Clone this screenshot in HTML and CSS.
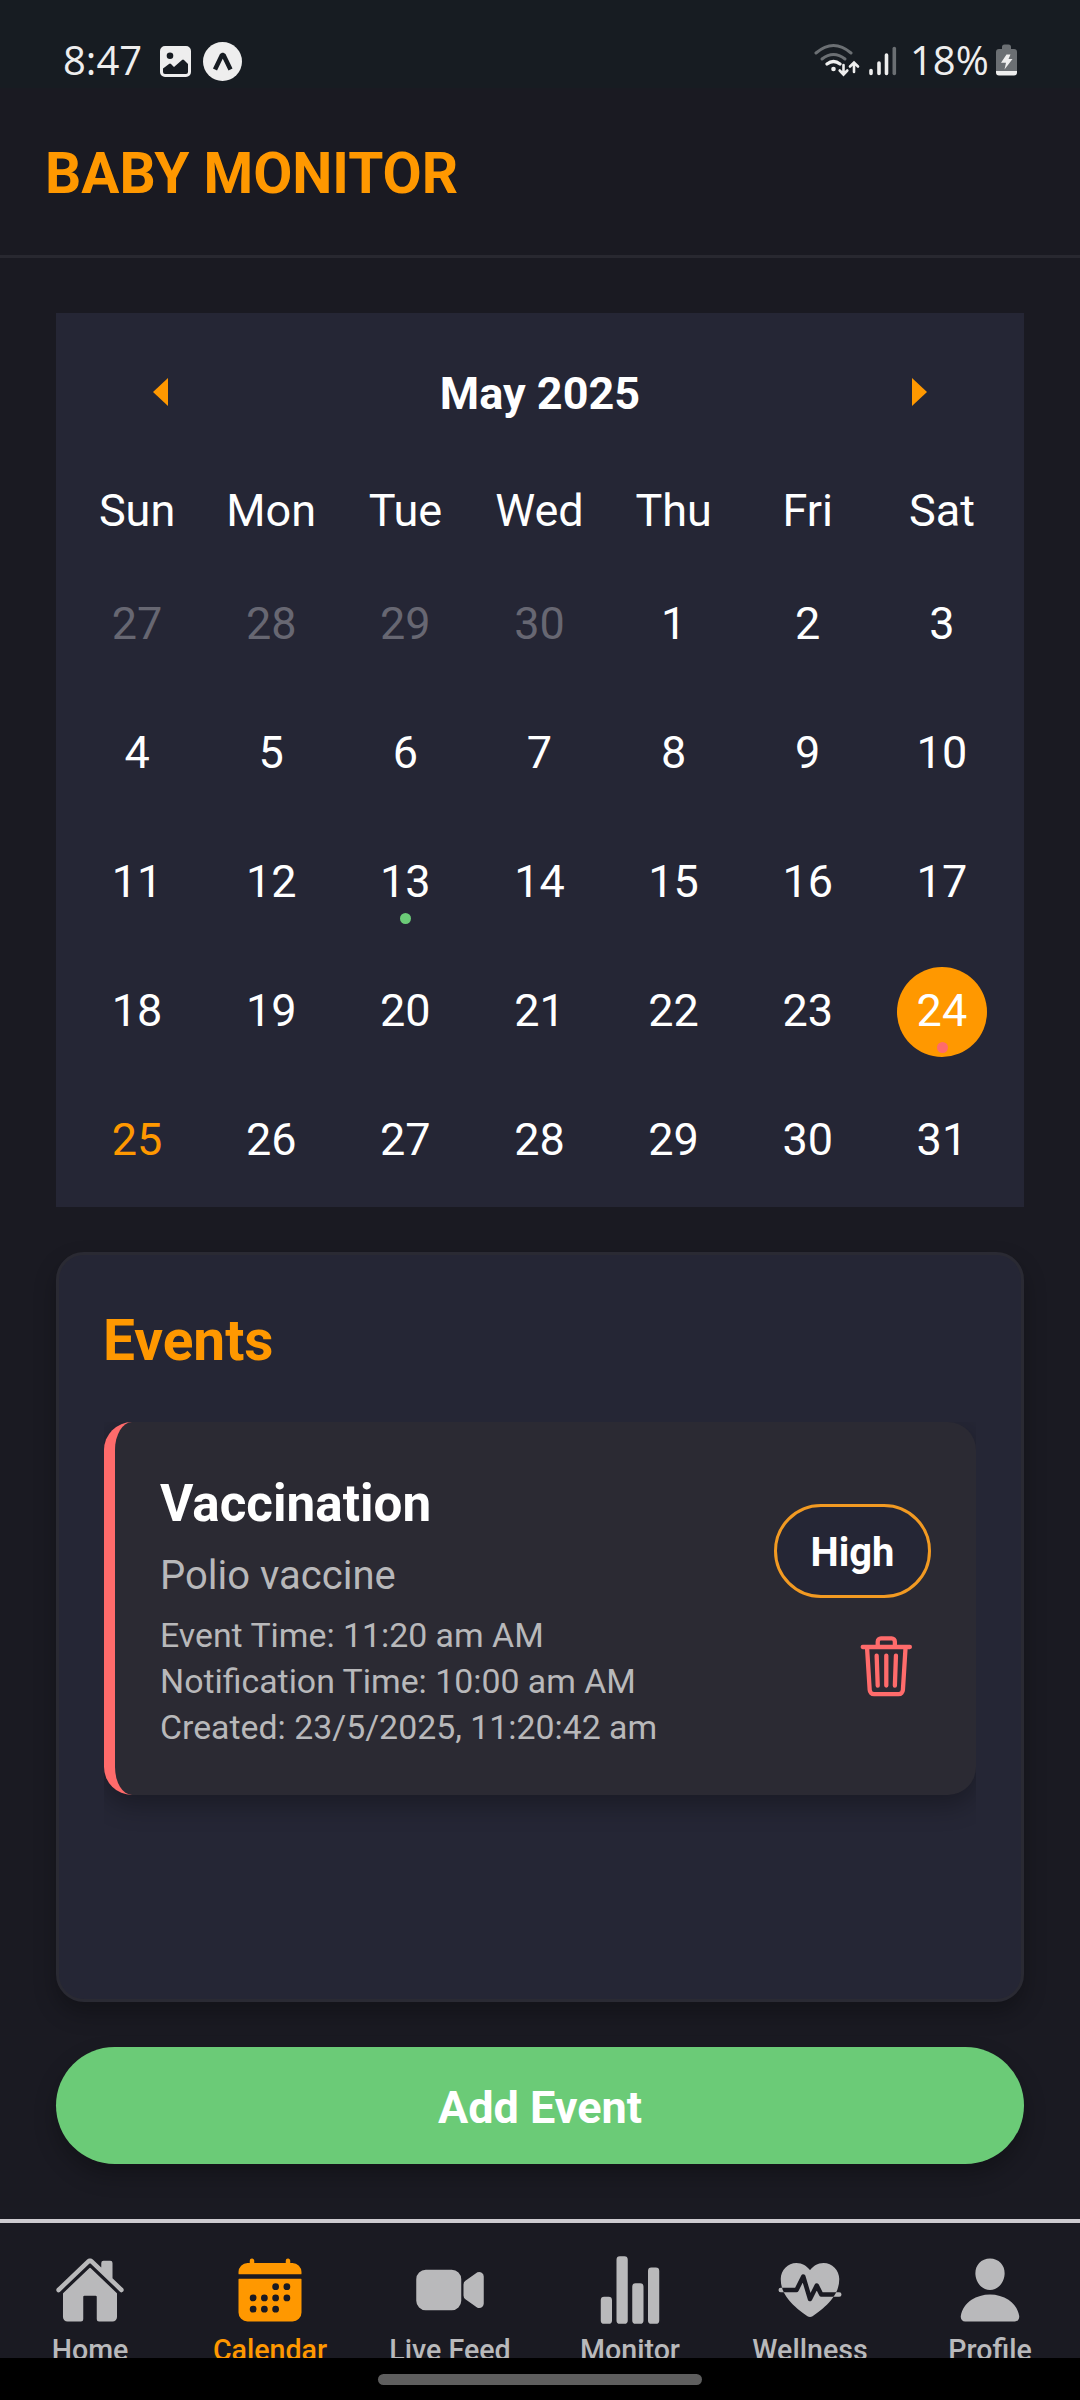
FILE: index.html
```html
<!DOCTYPE html>
<html lang="en">
<head>
<meta charset="utf-8">
<title>Baby Monitor</title>
<link rel="stylesheet" href="styles.css">
</head>
<body>
<div class="screen">
  <div class="status">
    <span class="status-text clock">8:47</span>
    <svg class="ic-photo" viewBox="0 0 31 31"><path fill="#eee" fill-rule="evenodd" d="M5 0h21a5 5 0 015 5v21a5 5 0 01-5 5H5a5 5 0 01-5-5V5a5 5 0 015-5zM10 6.500a3.300 3.300 0 100 6.600 3.300 3.300 0 000-6.600zM3 22.500V26a2 2 0 002 2h21a2 2 0 002-2v-8l-4-4a1.500 1.500 0 00-2 0l-8 7-3-3a1.500 1.500 0 00-2 0z"/></svg>
    <svg class="ic-expo" viewBox="0 0 39 39"><circle cx="19.500" cy="19.500" r="19.500" fill="#eee"/><path d="M12 27.500L19 13h1.500L27.500 27.500" fill="none" stroke="#171c22" stroke-width="4.500" stroke-linejoin="bevel"/></svg>
    <span class="spacer"></span>
    <svg class="ic-wifi" viewBox="0 0 46 34" fill="none" stroke-linecap="round"><g stroke="#6b6f73" stroke-width="3"><path d="M2 10q17.500-15 35 0"/><path d="M8 16q11.500-9 23 0"/></g><path d="M13 21q6.500-5 13 0" stroke="#eee" stroke-width="3.400"/><circle cx="19.500" cy="26" r="2.300" fill="#eee"/><path d="M29.500 22v9m-3.800-3.500l3.800 4 3.800-4M40 29v-9m-4 3.500l4-4 4 4" stroke="#eee" stroke-width="2.600"/></svg>
    <svg class="ic-signal" viewBox="0 0 28 30" stroke="#eee" stroke-width="3.600" stroke-linecap="round"><path d="M2 24.500v3M10 17v10.500M17.500 9v18.500"/><path d="M25.300 2.500v25" stroke="#6b6f73"/></svg>
    <span class="status-text battery-text">18%</span>
    <svg class="ic-battery" viewBox="0 0 21 32"><path fill="#6b6f73" d="M6 5V3a2.500 2.500 0 012.500-2.500h4A2.500 2.500 0 0115 3v2h3a3 3 0 013 3v19H0V8a3 3 0 013-3z"/><path fill="#eee" d="M0 27h21v1.500a3 3 0 01-3 3H3a3 3 0 01-3-3zM10.500 10.500h4L12.500 15h4L8.500 25.500l1.500-6.700H5z"/></svg>
  </div>
  <header class="header"><h1 class="title">BABY MONITOR</h1></header>
  <main class="main">
    <section class="calendar">
      <div class="cal-head">
        <svg class="arrow" viewBox="0 0 15 28"><path d="M15 0v28L0 14z"/></svg>
        <span class="month">May 2025</span>
        <svg class="arrow" viewBox="0 0 15 28"><path d="M0 0v28l15-14z"/></svg>
      </div>
      <div class="week names"><span>Sun</span><span>Mon</span><span>Tue</span><span>Wed</span><span>Thu</span><span>Fri</span><span>Sat</span></div>
      <div class="days">
        <span class="day out">27</span><span class="day out">28</span><span class="day out">29</span><span class="day out">30</span><span class="day">1</span><span class="day">2</span><span class="day">3</span>
        <span class="day">4</span><span class="day">5</span><span class="day">6</span><span class="day">7</span><span class="day">8</span><span class="day">9</span><span class="day">10</span>
        <span class="day">11</span><span class="day">12</span><span class="day">13<i class="dot green"></i></span><span class="day">14</span><span class="day">15</span><span class="day">16</span><span class="day">17</span>
        <span class="day">18</span><span class="day">19</span><span class="day">20</span><span class="day">21</span><span class="day">22</span><span class="day">23</span><span class="day selected">24<i class="dot red"></i></span>
        <span class="day today">25</span><span class="day">26</span><span class="day">27</span><span class="day">28</span><span class="day">29</span><span class="day">30</span><span class="day">31</span>
      </div>
    </section>
    <section class="events">
      <h2 class="events-title">Events</h2>
      <div class="event-list">
        <article class="event">
          <div class="event-info">
            <h3 class="event-name">Vaccination</h3>
            <p class="event-desc">Polio vaccine</p>
            <p class="event-meta">Event Time: 11:20 am AM</p>
            <p class="event-meta">Notification Time: 10:00 am AM</p>
            <p class="event-meta">Created: 23/5/2025, 11:20:42 am</p>
          </div>
          <div class="event-side">
            <span class="badge">High</span>
            <svg class="trash" viewBox="0 0 512 512"><path d="M112 112l20 320c.95 18.490 14.400 32 32 32h184c17.670 0 30.870-13.510 32-32l20-320M80 112h352M192 112V72a24 24 0 0124-24h80a24 24 0 0124 24v40M256 176v224M184 176l8 224M328 176l-8 224"/></svg>
          </div>
        </article>
      </div>
    </section>
    <button class="add">Add Event</button>
  </main>
  <nav class="tabs">
    <div class="tab"><svg class="tab-icon" viewBox="0 0 512 512"><path d="M261.560 101.280a8 8 0 00-11.060 0L66.400 277.150a8 8 0 00-2.470 5.790L63.900 448a32 32 0 0032 32H192a16 16 0 0016-16V304a8 8 0 018-8h80a8 8 0 018 8v160a16 16 0 0016 16h96.060a32 32 0 0032-32V282.940a8 8 0 00-2.470-5.790z"/><path d="M490.910 244.150l-74.800-71.560V64a16 16 0 00-16-16h-48a16 16 0 00-16 16v32l-57.920-55.380C272.770 35.140 264.710 32 256 32c-8.680 0-16.720 3.140-22.140 8.630l-212.700 203.500c-6.220 6-7 15.870-1.340 22.370A16 16 0 0043 267.560L250.500 69.280a8 8 0 0111.060 0l207.520 198.280a16 16 0 0022.590-.44c6.140-6.360 5.630-16.860-.76-22.970z"/></svg><span>Home</span></div>
    <div class="tab active"><svg class="tab-icon" viewBox="0 0 512 512"><path fill-rule="evenodd" d="M480 128a64 64 0 00-64-64h-16V48.450c0-8.610-6.620-16-15.230-16.430A16 16 0 00368 48v16H144V48.450c0-8.610-6.620-16-15.230-16.430A16 16 0 00112 48v16H96a64 64 0 00-64 64v12a4 4 0 004 4h440a4 4 0 004-4zM32 416a64 64 0 0064 64h320a64 64 0 0064-64V179a3 3 0 00-3-3H35a3 3 0 00-3 3zm344-208a24 24 0 11-24 24 24 24 0 0124-24zm0 80a24 24 0 11-24 24 24 24 0 0124-24zm-80-80a24 24 0 11-24 24 24 24 0 0124-24zm0 80a24 24 0 11-24 24 24 24 0 0124-24zm0 80a24 24 0 11-24 24 24 24 0 0124-24zm-80-80a24 24 0 11-24 24 24 24 0 0124-24zm0 80a24 24 0 11-24 24 24 24 0 0124-24zm-80-80a24 24 0 11-24 24 24 24 0 0124-24zm0 80a24 24 0 11-24 24 24 24 0 0124-24z"/></svg><span>Calendar</span></div>
    <div class="tab"><svg class="tab-icon" viewBox="0 0 512 512"><path d="M464 384.390a32 32 0 01-13-2.770 15.770 15.770 0 01-2.710-1.540l-82.710-58.220A32 32 0 01352 295.700v-79.400a32 32 0 0113.580-26.160l82.710-58.220a15.770 15.770 0 012.710-1.540 32 32 0 0145 29.240v192.760a32 32 0 01-32 32zM268 400H84a68.070 68.070 0 01-68-68V180a68.070 68.070 0 0168-68h184.480A67.600 67.600 0 01336 179.520V332a68.070 68.070 0 01-68 68z"/></svg><span>Live Feed</span></div>
    <div class="tab"><svg class="tab-icon" viewBox="0 0 512 512"><path d="M104 496H72a24 24 0 01-24-24V328a24 24 0 0124-24h32a24 24 0 0124 24v144a24 24 0 01-24 24zM328 496h-32a24 24 0 01-24-24V232a24 24 0 0124-24h32a24 24 0 0124 24v240a24 24 0 01-24 24zM440 496h-32a24 24 0 01-24-24V120a24 24 0 0124-24h32a24 24 0 0124 24v352a24 24 0 01-24 24zM216 496h-32a24 24 0 01-24-24V40a24 24 0 0124-24h32a24 24 0 0124 24v432a24 24 0 01-24 24z"/></svg><span>Monitor</span></div>
    <div class="tab"><svg class="tab-icon" viewBox="0 0 512 512"><defs><path id="heart" d="M256 448a32 32 0 01-18-5.570c-78.590-53.350-112.620-89.930-131.390-112.800-40-48.750-59.150-98.800-58.610-153C48.630 114.520 98.460 64 159.080 64c44.080 0 74.610 24.830 92.390 45.510a6 6 0 009.060 0C278.310 88.810 308.840 64 352.920 64c60.620 0 110.450 50.520 111.080 112.640.540 54.210-18.630 104.260-58.610 153-18.770 22.870-52.800 59.450-131.390 112.800a32 32 0 01-18 5.560z"/><clipPath id="heart-clip"><use href="#heart"/></clipPath></defs><path class="pulse" d="M48 256h112l48-96 48 160 48-96 32 64h128"/><use href="#heart"/><path class="pulse cut" clip-path="url(#heart-clip)" d="M48 256h112l48-96 48 160 48-96 32 64h128"/></svg><span>Wellness</span></div>
    <div class="tab"><svg class="tab-icon" viewBox="0 0 512 512"><path d="M332.640 64.580C313.180 43.570 286 32 256 32c-30.160 0-57.430 11.500-76.800 32.380-19.580 21.110-29.120 49.800-26.880 80.780C156.760 206.280 203.270 256 256 256s99.160-49.710 103.670-110.820c2.270-30.700-7.330-59.330-27.030-80.600zM432 480H80a31 31 0 01-24.200-11.130c-6.500-7.770-9.120-18.380-7.180-29.110C57.060 392.940 83.400 353.610 124.800 326c36.780-24.510 83.370-38 131.200-38s94.420 13.500 131.200 38c41.400 27.600 67.740 66.930 76.180 113.750 1.940 10.730-.68 21.340-7.180 29.110A31 31 0 01432 480z"/></svg><span>Profile</span></div>
  </nav>
  <div class="gesture"><span class="handle"></span></div>
</div>
</body>
</html>
```
FILE: styles.css
```css
* { box-sizing: border-box; margin: 0; padding: 0; }
body { background: #1a1a22; font-family: Roboto, sans-serif; color: #fff; }
.screen { width: 1080px; height: 2400px; overflow: hidden; display: flex; flex-direction: column; }
svg { display: block; flex: none; }

.status { height: 88px; background: #171c22; display: flex; align-items: flex-start; padding: 0 63px 0 63px; }
.status-text { font: 400 40px/54px "Open Sans", sans-serif; color: #eee; margin-top: 33px; white-space: nowrap; }
.clock { width: 97px; }
.ic-photo { width: 31px; height: 31px; margin-top: 46px; }
.ic-expo { width: 39px; height: 39px; margin: 42px 0 0 12px; }
.spacer { flex: 1; }
.ic-wifi { width: 46px; height: 34px; margin-top: 43px; }
.ic-signal { width: 28px; height: 30px; margin: 46px 0 0 9px; }
.battery-text { width: 86px; margin-left: 13px; }
.ic-battery { width: 21px; height: 32px; margin-top: 44px; }

.header { height: 170px; border-bottom: 3px solid #282830; padding: 53px 45px 0; }
.title { font-size: 56.8px; line-height: 66px; font-weight: 700; color: #ff9800; }

.main { height: 1961px; padding: 55px 56px 0; display: flex; flex-direction: column; }
.calendar { height: 894px; background: #252635; padding: 0 14px; }
.cal-head { height: 158px; padding: 0 83px; display: flex; align-items: center; justify-content: space-between; }
.arrow { width: 15px; height: 28px; fill: #ff9800; }
.month { font-size: 45px; line-height: 53px; font-weight: 700; padding-top: 3px; }
.week, .days { display: grid; grid-template-columns: repeat(7, 134.15px); justify-items: center; }
.names { font-size: 45px; line-height: 53px; height: 109px; padding-top: 13px; }
.days { row-gap: 39.1px; }
.day { position: relative; width: 90px; height: 90px; border-radius: 50%; font-size: 45px; line-height: 87px; text-align: center; }
.out { color: #676772; }
.today { color: #ff9800; }
.selected { background: #ff9800; }
.dot { position: absolute; left: 40px; top: 75px; width: 11px; height: 11px; border-radius: 50%; }
.green { background: #6bcb77; }
.red { background: #ff6b6b; }

.events { height: 750px; margin-top: 45px; background: #252635; border: 3px solid #2a2a33; border-radius: 28px; padding: 53px 45px 0; box-shadow: 0 11px 22px rgba(0, 0, 0, .28); }
.events-title { font-size: 56.8px; line-height: 66px; font-weight: 700; color: #ff9800; margin-left: -1px; }
.event-list { margin-top: 48px; height: 530px; overflow: hidden; }
.event { height: 373px; background: #2b2a33; border-left: 11px solid #ff6b6b; border-radius: 28px; display: flex; justify-content: space-between; padding: 0 45px; box-shadow: 0 10px 26px rgba(0, 0, 0, .3); }
.event-info { padding-top: 52px; }
.event-name { font-size: 51.2px; line-height: 60px; font-weight: 700; }
.event-desc { font-size: 40px; line-height: 46px; margin-top: 19px; color: #b8b8ba; }
.event-meta { font-size: 33.85px; line-height: 46px; color: #b8b8ba; }
.event-desc + .event-meta { margin-top: 14px; }
.event-side { display: flex; flex-direction: column; align-items: flex-end; padding-top: 82px; }
.badge { width: 157px; height: 94px; border: 3px solid #f29a22; border-radius: 47px; background: #252635; font-size: 39.9px; line-height: 91px; font-weight: 700; text-align: center; }
.trash { width: 68.6px; height: 68.6px; margin: 34px 10px 0 0; fill: none; stroke: #ff6b6b; stroke-width: 32; stroke-linecap: round; stroke-linejoin: round; }
.add { margin-top: 45px; height: 117px; border: 0; border-radius: 59px; background: #6bcb77; color: #fff; font: 700 45px/53px Roboto, sans-serif; padding-top: 3px; box-shadow: 0 11px 22px rgba(0, 0, 0, .28); }

.tabs { height: 139px; flex: none; border-top: 4px solid #cdcbd0; padding-top: 31px; display: grid; grid-template-columns: repeat(6, 1fr); overflow: hidden; background: #1a1a22; }
.tab { display: flex; flex-direction: column; align-items: center; color: #b9b9bb; fill: currentColor; font-size: 28.6px; line-height: 33px; font-weight: 500; }
.tab-icon { width: 72px; height: 72px; margin-bottom: 8px; }
.active { color: #ff9800; }
.pulse { fill: none; stroke: currentColor; stroke-width: 32; stroke-linecap: round; stroke-linejoin: round; }
.cut { stroke: #1a1a22; }
.gesture { height: 42px; flex: none; background: #000; display: flex; justify-content: center; padding-top: 16px; }
.handle { width: 324px; height: 11px; border-radius: 6px; background: #5e5e5e; }
```
